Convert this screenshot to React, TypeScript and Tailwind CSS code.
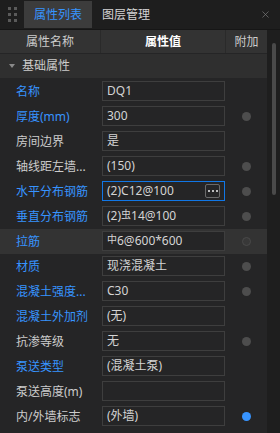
import { X } from 'lucide-react';

type Row = {
  label: string;
  value: React.ReactNode;
  blue?: boolean;
  dot?: 'gray' | 'blue' | 'hollow';
  focused?: boolean;
  selected?: boolean;
};

const rows: Row[] = [
  { label: '名称', value: 'DQ1', blue: true },
  { label: '厚度(mm)', value: '300', blue: true, dot: 'gray' },
  { label: '房间边界', value: '是' },
  { label: '轴线距左墙...', value: '(150)', dot: 'gray' },
  { label: '水平分布钢筋', value: '(2)C12@100', blue: true, dot: 'gray', focused: true },
  {
    label: '垂直分布钢筋',
    value: (
      <>
        (2)<span className="text-[10px] relative -top-[2px]">虫</span>14@100
      </>
    ),
    blue: true,
    dot: 'gray',
  },
  {
    label: '拉筋',
    value: (
      <>
        <span className="text-[10px] relative -top-[2px]">中</span>6@600*600
      </>
    ),
    blue: true,
    dot: 'hollow',
    selected: true,
  },
  { label: '材质', value: '现浇混凝土', blue: true, dot: 'gray' },
  { label: '混凝土强度...', value: 'C30', blue: true, dot: 'gray' },
  { label: '混凝土外加剂', value: '(无)', blue: true },
  { label: '抗渗等级', value: '无', dot: 'gray' },
  { label: '泵送类型', value: '(混凝土泵)', blue: true },
  { label: '泵送高度(m)', value: '' },
  { label: '内/外墙标志', value: '(外墙)', dot: 'blue' },
];

function Dot({ kind }: { kind?: Row['dot'] }) {
  if (!kind) return null;
  if (kind === 'blue') return <div className="w-[9px] h-[9px] rounded-full bg-[#3794ff]" />;
  if (kind === 'hollow')
    return <div className="w-[9px] h-[9px] rounded-full bg-[#383838] border border-[#4a4a4a]" />;
  return <div className="w-[9px] h-[9px] rounded-full bg-[#4d4d4d]" />;
}

export default function App() {
  return (
    <div
      className="w-[280px] h-[433px] bg-[#1e1e1e] text-[12px] overflow-hidden flex flex-col"
      style={{ fontFamily: '"Noto Sans", "Noto Sans CJK SC", sans-serif' }}
    >
      {/* Tab bar */}
      <div className="h-[30px] flex items-stretch shrink-0 border-b border-[#161616]">
        <div className="w-[24px] flex items-center justify-center">
          <div className="grid grid-cols-2 gap-x-[3px] gap-y-[3px]">
            {Array.from({ length: 6 }).map((_, i) => (
              <div key={i} className="w-[3px] h-[3px] bg-[#5a5a5a]" />
            ))}
          </div>
        </div>
        <div className="w-[68px] my-[1px] bg-[#3c3c3c] flex items-center justify-center text-[#3794ff]">
          属性列表
        </div>
        <div className="flex items-center pl-[10px] text-[#d4d4d4]">图层管理</div>
        <div className="flex-1" />
        <div className="w-[30px] flex items-center justify-center text-[#7a7a7a]">
          <X size={11} strokeWidth={1.5} />
        </div>
      </div>

      <div className="flex flex-1 min-h-0">
        {/* Grid */}
        <div className="w-[267px] flex flex-col bg-[#252526]">
          {/* Header */}
          <div className="h-[24px] flex bg-[#333333] border-b border-[#252526] text-[#cccccc]">
            <div className="w-[101px] flex items-center justify-center border-r border-[#2a2a2a]">属性名称</div>
            <div className="w-[125px] flex items-center justify-center border-r border-[#2a2a2a] text-white font-bold">
              属性值
            </div>
            <div className="flex-1 flex items-center justify-center">附加</div>
          </div>

          {/* Section */}
          <div className="h-[25px] flex items-center bg-[#2f2f2f] border-b border-[#252526] text-[#cccccc]">
            <div className="w-[22px] flex justify-center pl-[2px]">
              <div className="w-0 h-0 border-l-[3px] border-r-[3px] border-t-[4px] border-l-transparent border-r-transparent border-t-[#8a8a8a]" />
            </div>
            基础属性
          </div>

          {/* Rows */}
          {rows.map((r) => (
            <div
              key={r.label}
              className={`h-[25px] flex items-center ${r.selected ? 'bg-[#333333]' : ''}`}
            >
              <div
                className={`w-[101px] pl-[16px] whitespace-nowrap ${r.blue ? 'text-[#3794ff]' : 'text-[#cccccc]'}`}
              >
                {r.label}
              </div>
              <div className="w-[125px] pl-[1px] pr-[1px] pb-[1px]">
                <div
                  className={`h-[20px] flex items-center pl-[4px] pr-[4px] text-[#d4d4d4] border bg-[#252526] ${
                    r.focused ? 'border-[#1177e6]' : 'border-[#3e3e3e]'
                  }`}
                >
                  <span className="flex-1 whitespace-nowrap">{r.value}</span>
                  {r.focused && (
                    <div className="w-[15px] h-[14px] border border-[#6a6a6a] rounded-[2px] flex items-center justify-center gap-[2px]">
                      <div className="w-[2px] h-[2px] bg-[#bbbbbb]" />
                      <div className="w-[2px] h-[2px] bg-[#bbbbbb]" />
                      <div className="w-[2px] h-[2px] bg-[#bbbbbb]" />
                    </div>
                  )}
                </div>
              </div>
              <div className="flex-1 flex items-center justify-center">
                <Dot kind={r.dot} />
              </div>
            </div>
          ))}
        </div>

        {/* Scrollbar */}
        <div className="flex-1 pt-[13px] flex justify-center">
          <div className="w-[4px] h-[152px] bg-[#4a4a4a] rounded-[2px]" />
        </div>
      </div>
    </div>
  );
}
